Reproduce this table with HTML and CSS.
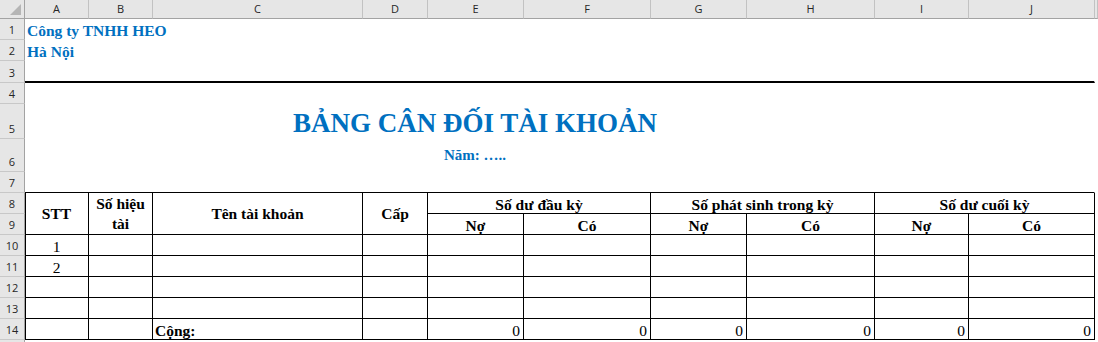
FILE: index.html
```html
<!DOCTYPE html>
<html lang="vi">
<head>
<meta charset="utf-8">
<title>Bảng cân đối tài khoản</title>
<link rel="stylesheet" href="styles.css">
</head>
<body>
<div class="sheet">
  <div class="corner"><span class="tri"></span></div>
  <div class="ch">A</div><div class="ch">B</div><div class="ch">C</div><div class="ch">D</div><div class="ch">E</div><div class="ch">F</div><div class="ch">G</div><div class="ch">H</div><div class="ch">I</div><div class="ch">J</div><div class="ch"></div>

  <div class="rh">1</div><div class="cell wide bottom company">Công ty TNHH HEO</div><div class="cell"></div>
  <div class="rh">2</div><div class="cell wide bottom company">Hà Nội</div><div class="cell"></div>
  <div class="rh">3</div><div class="cell wide thick"></div><div class="cell"></div>
  <div class="rh">4</div><div class="cell wide"></div><div class="cell"></div>
  <div class="rh">5</div><div class="cell wide bottom center title">BẢNG CÂN ĐỐI TÀI KHOẢN</div><div class="cell"></div>
  <div class="rh">6</div><div class="cell wide middle center year">Năm: …..</div><div class="cell"></div>
  <div class="rh">7</div><div class="cell wide topline"></div><div class="cell"></div>

  <div class="rh">8</div>
  <div class="cell t first tall middle center">STT</div>
  <div class="cell t tall middle center wrap">Số hiệu tài</div>
  <div class="cell t tall middle center">Tên tài khoản</div>
  <div class="cell t tall middle center">Cấp</div>
  <div class="cell t pair bottom center">Số dư đầu kỳ</div>
  <div class="cell t pair bottom center">Số phát sinh trong kỳ</div>
  <div class="cell t pair bottom center">Số dư cuối kỳ</div>
  <div class="cell"></div>

  <div class="rh">9</div>
  <div class="cell t bottom center">Nợ</div><div class="cell t bottom center">Có</div>
  <div class="cell t bottom center">Nợ</div><div class="cell t bottom center">Có</div>
  <div class="cell t bottom center">Nợ</div><div class="cell t bottom center">Có</div>
  <div class="cell"></div>

  <div class="rh">10</div>
  <div class="cell t first bottom center num">1</div><div class="cell t"></div><div class="cell t"></div><div class="cell t"></div><div class="cell t"></div><div class="cell t"></div><div class="cell t"></div><div class="cell t"></div><div class="cell t"></div><div class="cell t"></div><div class="cell"></div>

  <div class="rh">11</div>
  <div class="cell t first bottom center num">2</div><div class="cell t"></div><div class="cell t"></div><div class="cell t"></div><div class="cell t"></div><div class="cell t"></div><div class="cell t"></div><div class="cell t"></div><div class="cell t"></div><div class="cell t"></div><div class="cell"></div>

  <div class="rh">12</div>
  <div class="cell t first"></div><div class="cell t"></div><div class="cell t"></div><div class="cell t"></div><div class="cell t"></div><div class="cell t"></div><div class="cell t"></div><div class="cell t"></div><div class="cell t"></div><div class="cell t"></div><div class="cell"></div>

  <div class="rh">13</div>
  <div class="cell t first"></div><div class="cell t"></div><div class="cell t"></div><div class="cell t"></div><div class="cell t"></div><div class="cell t"></div><div class="cell t"></div><div class="cell t"></div><div class="cell t"></div><div class="cell t"></div><div class="cell"></div>

  <div class="rh">14</div>
  <div class="cell t first"></div><div class="cell t"></div>
  <div class="cell t bottom left">Cộng:</div>
  <div class="cell t"></div>
  <div class="cell t bottom right num">0</div><div class="cell t bottom right num">0</div>
  <div class="cell t bottom right num">0</div><div class="cell t bottom right num">0</div>
  <div class="cell t bottom right num">0</div><div class="cell t bottom right num">0</div>
  <div class="cell"></div>

  <div class="rh"></div>
  <div class="cell"></div><div class="cell"></div><div class="cell"></div><div class="cell"></div><div class="cell"></div><div class="cell"></div><div class="cell"></div><div class="cell"></div><div class="cell"></div><div class="cell"></div><div class="cell"></div>
</div>
</body>
</html>
```

FILE: styles.css
```css
html, body {
  margin: 0;
  padding: 0;
  background: #ffffff;
}

.sheet {
  width: 1098px;
  height: 342px;
  overflow: hidden;
  display: grid;
  grid-template-columns: 25px 64px 64px 210px 65px 96px 127px 96px 128px 94px 126px 1fr;
  grid-template-rows: 19px 21px 21px 22px 21px 35px 33px 21px repeat(7, 21px) 1fr;
  font-family: "Liberation Serif", "Times New Roman", serif;
  font-weight: bold;
  font-size: 15.5px;
  line-height: 17px;
  color: #000;
}

.corner,
.ch,
.rh {
  box-sizing: border-box;
  background: #e6e6e6;
  font-family: "Open Sans", "Noto Sans", sans-serif;
  font-weight: normal;
  font-size: 11px;
  color: #262626;
  display: flex;
  overflow: hidden;
}

.corner {
  border-right: 1px solid #a3a3a3;
  border-bottom: 1px solid #a3a3a3;
  justify-content: flex-end;
  align-items: flex-end;
  padding: 0 3px 3px 0;
}

.tri {
  width: 11px;
  height: 11px;
  background: #b5b5b5;
  clip-path: polygon(100% 0, 100% 100%, 0 100%);
}

.ch {
  border-right: 1px solid #c2c2c2;
  border-bottom: 1px solid #a3a3a3;
  justify-content: center;
  align-items: center;
  line-height: 14px;
}

.rh {
  border-right: 1px solid #a3a3a3;
  border-bottom: 1px solid #c8c8c8;
  justify-content: center;
  align-items: flex-end;
  line-height: 14px;
  padding-bottom: 2px;
}

.cell {
  box-sizing: border-box;
  border-right: 1px solid transparent;
  border-bottom: 1px solid transparent;
  display: flex;
  white-space: nowrap;
  min-width: 0;
}

.wide {
  grid-column: span 10;
}

.bottom { align-items: flex-end; }
.middle { align-items: center; }
.center { justify-content: center; text-align: center; }
.left { padding-left: 2px; }
.right { justify-content: flex-end; padding-right: 3px; }

.company {
  color: #0070c0;
  padding-left: 2px;
}

.thick {
  border-bottom: 2px solid #000;
}

.topline {
  border-bottom: 1px solid #000;
}

.title {
  color: #0070c0;
  font-size: 27px;
  line-height: 30px;
  padding-right: 169px;
}

.year {
  color: #0070c0;
  font-size: 15px;
  padding-right: 169px;
}

.t {
  border-right: 1px solid #000;
  border-bottom: 1px solid #000;
}

.first {
  box-shadow: inset 1px 0 0 #000;
}

.tall {
  grid-row: span 2;
}

.pair {
  grid-column: span 2;
}

.wrap {
  white-space: normal;
  line-height: 20px;
  padding: 0 6px;
}

.num {
  font-weight: normal;
}
```
